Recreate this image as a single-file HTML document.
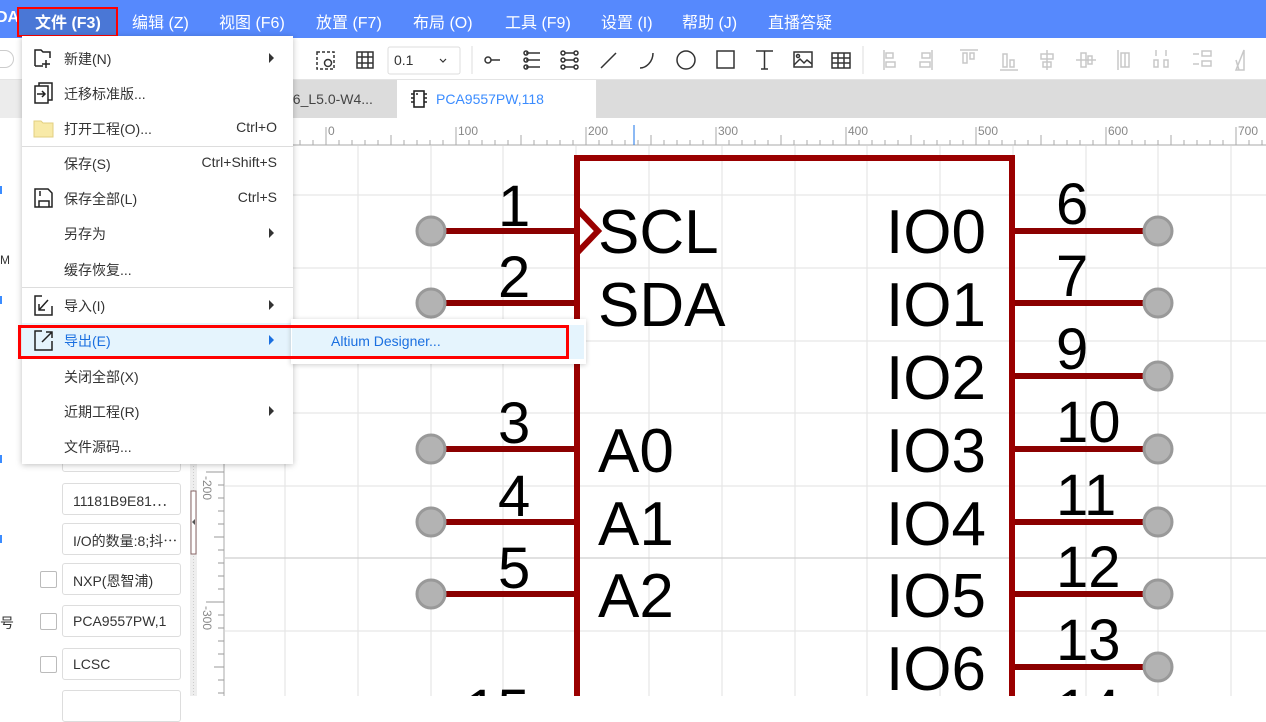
<!DOCTYPE html>
<html><head><meta charset="utf-8"><style>
*{margin:0;padding:0;box-sizing:border-box}
body{width:1266px;height:696px;overflow:hidden;position:relative;background:#fff;font-family:"Liberation Sans","Noto Sans CJK SC",sans-serif;color:#333}
.abs{position:absolute}
.mb{left:0;top:0;width:1266px;height:38px;background:#5689fd}
.mi{position:absolute;top:9px;color:#fff;font-size:16px;white-space:nowrap}
.menu{left:22px;top:36px;width:271px;height:428px;background:#fff;box-shadow:0 1px 6px rgba(0,0,0,.25)}
.it{position:absolute;left:0;width:271px;height:35px;font-size:14px;color:#333}
.it .t{position:absolute;left:42px;top:8px}
.it .k{position:absolute;right:16px;top:8px;color:#333}
.it .a{position:absolute;left:247px;top:12px;width:0;height:0;border-left:5px solid #333;border-top:5px solid transparent;border-bottom:5px solid transparent}
.it svg{position:absolute;left:11px;top:6px}
.sep{position:absolute;left:0;width:271px;height:1px;background:#ddd}
.inp{position:absolute;left:62px;width:119px;height:32px;border:1px solid #ddd;border-radius:3px;font-size:14px;color:#333;padding:7px 0 0 10px;white-space:nowrap;overflow:hidden;background:#fff}
.cb{position:absolute;left:40px;width:17px;height:17px;border:1px solid #bbb;border-radius:2px}
</style></head><body>

<svg class="abs" style="left:0;top:0" width="1266" height="696">
<g stroke="#e6e6e6" stroke-width="1.2">
<line x1="212" y1="146" x2="212" y2="696"/><line x1="285" y1="146" x2="285" y2="696"/><line x1="358" y1="146" x2="358" y2="696"/><line x1="431" y1="146" x2="431" y2="696"/><line x1="503" y1="146" x2="503" y2="696"/><line x1="576" y1="146" x2="576" y2="696"/><line x1="649" y1="146" x2="649" y2="696"/><line x1="722" y1="146" x2="722" y2="696"/><line x1="795" y1="146" x2="795" y2="696"/><line x1="867" y1="146" x2="867" y2="696"/><line x1="940" y1="146" x2="940" y2="696"/><line x1="1013" y1="146" x2="1013" y2="696"/><line x1="1086" y1="146" x2="1086" y2="696"/><line x1="1158" y1="146" x2="1158" y2="696"/><line x1="1231" y1="146" x2="1231" y2="696"/>
<line x1="225" y1="195" x2="1266" y2="195"/><line x1="225" y1="268" x2="1266" y2="268"/><line x1="225" y1="341" x2="1266" y2="341"/><line x1="225" y1="413" x2="1266" y2="413"/><line x1="225" y1="486" x2="1266" y2="486"/><line x1="225" y1="631" x2="1266" y2="631"/>
</g>
<line x1="225" y1="558" x2="1266" y2="558" stroke="#cfcfcf" stroke-width="1.3"/>
<rect x="197" y="118" width="1069" height="28" fill="#fff"/>
<line x1="225" y1="145" x2="1266" y2="145" stroke="#aaa"/>
<g stroke="#aaa" stroke-width="1">
<path d="M300 145v-5M313 145v-5M326 145v-18M339 145v-5M352 145v-5M365 145v-5M378 145v-5M391 145v-10M404 145v-5M417 145v-5M430 145v-5M443 145v-5M456 145v-18M469 145v-5M482 145v-5M495 145v-5M508 145v-5M521 145v-10M534 145v-5M547 145v-5M560 145v-5M573 145v-5M586 145v-18M599 145v-5M612 145v-5M625 145v-5M638 145v-5M651 145v-10M664 145v-5M677 145v-5M690 145v-5M703 145v-5M716 145v-18M729 145v-5M742 145v-5M755 145v-5M768 145v-5M781 145v-10M794 145v-5M807 145v-5M820 145v-5M833 145v-5M846 145v-18M859 145v-5M872 145v-5M885 145v-5M898 145v-5M911 145v-10M924 145v-5M937 145v-5M950 145v-5M963 145v-5M976 145v-18M989 145v-5M1002 145v-5M1015 145v-5M1028 145v-5M1041 145v-10M1054 145v-5M1067 145v-5M1080 145v-5M1093 145v-5M1106 145v-18M1119 145v-5M1132 145v-5M1145 145v-5M1158 145v-5M1171 145v-10M1184 145v-5M1197 145v-5M1210 145v-5M1223 145v-5M1236 145v-18M1249 145v-5M1262 145v-5"/>
</g>
<line x1="634" y1="125" x2="634" y2="145" stroke="#1a73e8"/>
<g font-size="12" fill="#888" font-family="Liberation Sans">
<text x="328" y="135">0</text><text x="458" y="135">100</text><text x="588" y="135">200</text><text x="718" y="135">300</text><text x="848" y="135">400</text><text x="978" y="135">500</text><text x="1108" y="135">600</text><text x="1238" y="135">700</text>
</g>
<rect x="197" y="146" width="28" height="550" fill="#fff"/>
<line x1="224" y1="146" x2="224" y2="696" stroke="#aaa"/>
<g stroke="#999"><path d="M224 472h-18M224 485h-6M224 498h-6M224 511h-6M224 524h-6M224 537h-10M224 550h-6M224 563h-6M224 576h-6M224 589h-6M224 602h-18M224 615h-6M224 628h-6M224 641h-6M224 654h-6M224 667h-10M224 680h-6M224 693h-6"/></g>
<text transform="translate(203,476) rotate(90)" font-size="12" fill="#888">-200</text>
<text transform="translate(203,606) rotate(90)" font-size="12" fill="#888">-300</text>
<rect x="190" y="118" width="7" height="578" fill="#eee"/>
<line x1="193.5" y1="118" x2="193.5" y2="696" stroke="#ccc" stroke-dasharray="1 2"/>
<rect x="191" y="491" width="5" height="63" fill="#fff" stroke="#866" stroke-width="1"/>
<path d="M192 522l3-3v6z" fill="#555"/>
<g stroke="#8b0000" stroke-width="6" stroke-linecap="round">
<path d="M431 231H577M431 303H577M431 449H577M431 522H577M431 594H577"/>
<path d="M1012 231H1158M1012 303H1158M1012 376H1158M1012 449H1158M1012 522H1158M1012 594H1158M1012 667H1158"/>
</g>
<g stroke="#9a0000" stroke-width="6" fill="none">
<path d="M577 696V158H1012V696"/>
<path d="M577 209L598 231L577 253"/>
</g>
<g fill="#b3b3b3" stroke="#999" stroke-width="3">
<circle cx="431" cy="231" r="14"/><circle cx="431" cy="303" r="14"/><circle cx="431" cy="449" r="14"/><circle cx="431" cy="522" r="14"/><circle cx="431" cy="594" r="14"/>
<circle cx="1158" cy="231" r="14"/><circle cx="1158" cy="303" r="14"/><circle cx="1158" cy="376" r="14"/><circle cx="1158" cy="449" r="14"/><circle cx="1158" cy="522" r="14"/><circle cx="1158" cy="594" r="14"/><circle cx="1158" cy="667" r="14"/>
</g>
<g fill="#000" font-family="Liberation Sans" font-size="58">
<text x="498" y="226">1</text><text x="498" y="297">2</text><text x="498" y="443">3</text><text x="498" y="516">4</text><text x="498" y="588">5</text><text x="465" y="730">15</text>
<text x="1056" y="224">6</text><text x="1056" y="296">7</text><text x="1056" y="369">9</text><text x="1056" y="442">10</text><text x="1056" y="515">11</text><text x="1056" y="587">12</text><text x="1056" y="660">13</text><text x="1056" y="730">14</text>
</g>
<g fill="#000" font-family="Liberation Sans" font-size="62">
<text x="598" y="253">SCL</text><text x="598" y="326">SDA</text><text x="598" y="472">A0</text><text x="598" y="545">A1</text><text x="598" y="617">A2</text>
<text x="886" y="253">IO0</text><text x="886" y="326">IO1</text><text x="886" y="399">IO2</text><text x="886" y="472">IO3</text><text x="886" y="545">IO4</text><text x="886" y="617">IO5</text><text x="886" y="690">IO6</text>
</g>
</svg>

<div class="abs" style="left:197px;top:80px;width:1069px;height:38px;background:#dcdcdc"></div>
<div class="abs" style="left:0;top:80px;width:22px;height:38px;background:#ececec"></div>
<div class="abs" style="left:285px;top:91px;font-size:14px;color:#444">16_L5.0-W4...</div>
<div class="abs" style="left:397px;top:80px;width:200px;height:38px;background:#fff;border-right:1px solid #ddd"></div>
<svg class="abs" style="left:410px;top:89px" width="18" height="20"><rect x="4" y="2" width="10" height="16" fill="none" stroke="#222" stroke-width="1.6"/><path d="M1 5h3M1 9h3M1 13h3M14 5h3M14 9h3M14 13h3" stroke="#222" stroke-width="1.5"/><circle cx="7" cy="5" r="1" fill="#222"/></svg>
<div class="abs" style="left:436px;top:91px;font-size:14px;color:#3b8cff">PCA9557PW,118</div>

<div class="abs" style="left:0;top:38px;width:1266px;height:42px;background:#fff;border-bottom:1px solid #e4e4e4"></div>
<div class="abs" style="left:-10px;top:50px;width:24px;height:18px;border:1px solid #ccc;border-radius:9px"></div>
<svg class="abs" style="left:300px;top:44px" width="966" height="32" fill="none" stroke="#333" stroke-width="1.5">
<rect x="17" y="8" width="17" height="17" stroke-dasharray="3 2"/><circle cx="28" cy="19" r="3.5"/>
<path d="M57 8h16v16H57zM57 13h16M57 19h16M62 8v16M68 8v16"/>
<rect x="88" y="3" width="72" height="27" rx="2" stroke="#ddd" stroke-width="1"/>
<path d="M140 15l3 3 3-3" stroke-width="1.2"/>
<line x1="172" y1="2" x2="172" y2="30" stroke="#ddd" stroke-width="1"/>
<circle cx="188" cy="16" r="3"/><path d="M191 16h9"/>
<path d="M226 9h14M226 16h14M226 23h14"/><circle cx="226" cy="9" r="2"/><circle cx="226" cy="16" r="2"/><circle cx="226" cy="23" r="2"/>
<circle cx="263" cy="9" r="2"/><circle cx="263" cy="16" r="2"/><circle cx="263" cy="23" r="2"/><circle cx="276" cy="9" r="2"/><circle cx="276" cy="16" r="2"/><circle cx="276" cy="23" r="2"/><path d="M265 9h9M265 16h9M265 23h9"/>
<path d="M301 24l15-15"/><path d="M340 24c6 0 13-6 13-15"/>
<circle cx="386" cy="16" r="9"/><rect x="417" y="7" width="17" height="17"/>
<path d="M456 7h17M464.5 7v18M461 25h7"/>
<rect x="494" y="8" width="18" height="15"/><path d="M494 21l6-6 4 4 3-3 5 4"/><circle cx="498" cy="12" r="1.5"/>
<rect x="532" y="9" width="18" height="15"/><path d="M532 14h18M532 19h18M538 9v15M544 9v15"/>
<line x1="563" y1="2" x2="563" y2="30" stroke="#ddd" stroke-width="1"/>
<g stroke="#c8c8c8"><path d="M584 6v20M586 9h7v5h-7zM586 18h9v5h-9z"/><path d="M632 6v20M622 9h8v5h-8zM620 18h10v5h-10z"/><path d="M660 6h18M663 9h4v10h-4zM670 9h4v6h-4z"/><path d="M700 26h18M703 10h4v13h-4zM710 16h4v7h-4z"/><path d="M747 6v20M741 10h12v5h-12zM743 18h8v5h-8z"/><path d="M776 16h20M781 9h5v14h-5zM788 12h4v8h-4z"/><path d="M818 6v20M821 9h8v14h-8zM825 9v14"/><path d="M856 6v6M866 6v6M854 16h4v7h-4zM864 16h4v7h-4z"/><path d="M893 10h6M893 20h6M902 7h9v5h-9zM902 17h9v5h-9z"/><path d="M936 26l8-20v20zM939 26l-3-10"/></g>
</svg>
<div class="abs" style="left:394px;top:52px;font-size:14px;color:#333">0.1</div>

<div class="abs mb"></div>
<div class="mi" style="left:-4px;font-weight:bold">DA</div>
<div class="abs" style="left:17px;top:7px;width:101px;height:30px;background:#4a77d6;border:2px solid #f00"></div>
<div class="mi" style="left:35px;font-weight:bold">文件 (F3)</div>
<div class="mi" style="left:132px">编辑 (Z)</div>
<div class="mi" style="left:219px">视图 (F6)</div>
<div class="mi" style="left:316px">放置 (F7)</div>
<div class="mi" style="left:413px">布局 (O)</div>
<div class="mi" style="left:505px">工具 (F9)</div>
<div class="mi" style="left:601px">设置 (I)</div>
<div class="mi" style="left:682px">帮助 (J)</div>
<div class="mi" style="left:768px">直播答疑</div>

<div class="abs" style="left:0;top:253px;width:4px;height:12px;color:#333;font-size:12px">M</div>
<div class="abs" style="left:0;top:186px;width:2px;height:8px;background:#3b8cff"></div>
<div class="abs" style="left:0;top:296px;width:2px;height:8px;background:#3b8cff"></div>
<div class="abs" style="left:0;top:455px;width:2px;height:8px;background:#3b8cff"></div>
<div class="abs" style="left:0;top:535px;width:2px;height:8px;background:#3b8cff"></div>
<div class="inp" style="top:440px"></div>
<div class="inp" style="top:483px">11181B9E81⋯</div>
<div class="inp" style="top:523px">I/O的数量:8;抖⋯</div>
<div class="cb" style="top:571px"></div><div class="inp" style="top:563px">NXP(恩智浦)</div>
<div class="abs" style="left:0;top:613px;font-size:14px">号</div>
<div class="cb" style="top:613px"></div><div class="inp" style="top:605px">PCA9557PW,1</div>
<div class="cb" style="top:656px"></div><div class="inp" style="top:648px">LCSC</div>
<div class="inp" style="top:690px"></div>

<div class="abs menu">
<div class="it" style="top:5px"><svg width="22" height="22" fill="none" stroke="#222" stroke-width="1.5"><path d="M2 19V3h6l2 2h7v6M2 19h8M13 13v8M9 17h8"/></svg><span class="t">新建(N)</span><span class="a"></span></div>
<div class="it" style="top:40px"><svg width="22" height="22" fill="none" stroke="#222" stroke-width="1.5"><path d="M6 4V1h13v17h-4M2 4h13v17H2zM4 12h8M9 9l3 3-3 3"/></svg><span class="t">迁移标准版...</span></div>
<div class="it" style="top:75px"><svg width="22" height="22"><path d="M1 4h7l2 2h10v14H1z" fill="#f8eaa8" stroke="#e2cf80"/></svg><span class="t">打开工程(O)...</span><span class="k">Ctrl+O</span></div>
<div class="sep" style="top:110px"></div>
<div class="it" style="top:110px"><span class="t">保存(S)</span><span class="k">Ctrl+Shift+S</span></div>
<div class="it" style="top:145px"><svg width="22" height="22" fill="none" stroke="#222" stroke-width="1.5"><path d="M2 2h13l4 4v14H2zM6 20v-6h10v6M7 4v5"/></svg><span class="t">保存全部(L)</span><span class="k">Ctrl+S</span></div>
<div class="it" style="top:180px"><span class="t">另存为</span><span class="a"></span></div>
<div class="it" style="top:216px"><span class="t">缓存恢复...</span></div>
<div class="sep" style="top:251px"></div>
<div class="it" style="top:252px"><svg width="22" height="22" fill="none" stroke="#222" stroke-width="1.5"><path d="M9 2H2v19h17v-9M6 16L15 6M6 10v6h6"/></svg><span class="t">导入(I)</span><span class="a"></span></div>
<div class="it" style="top:287px;background:#e5f4fd"><svg width="22" height="22" fill="none" stroke="#222" stroke-width="1.5"><path d="M9 2H2v19h17v-9M9 13L19 3M13 3h6v6"/></svg><span class="t" style="color:#1a6fe0">导出(E)</span><span class="a" style="border-left-color:#1a6fe0"></span></div>
<div class="it" style="top:323px"><span class="t">关闭全部(X)</span></div>
<div class="it" style="top:358px"><span class="t">近期工程(R)</span><span class="a"></span></div>
<div class="it" style="top:393px"><span class="t">文件源码...</span></div>
</div>
<div class="abs" style="left:291px;top:319px;width:295px;height:45px;background:#fff;box-shadow:0 1px 5px rgba(0,0,0,.2)"></div>
<div class="abs" style="left:292px;top:325px;width:292px;height:34px;background:#e5f4fd"></div>
<div class="abs" style="left:331px;top:333px;font-size:14px;color:#1a6fe0">Altium Designer...</div>
<div class="abs" style="left:18px;top:325px;width:551px;height:34px;border:3px solid #f00"></div>
</body></html>
